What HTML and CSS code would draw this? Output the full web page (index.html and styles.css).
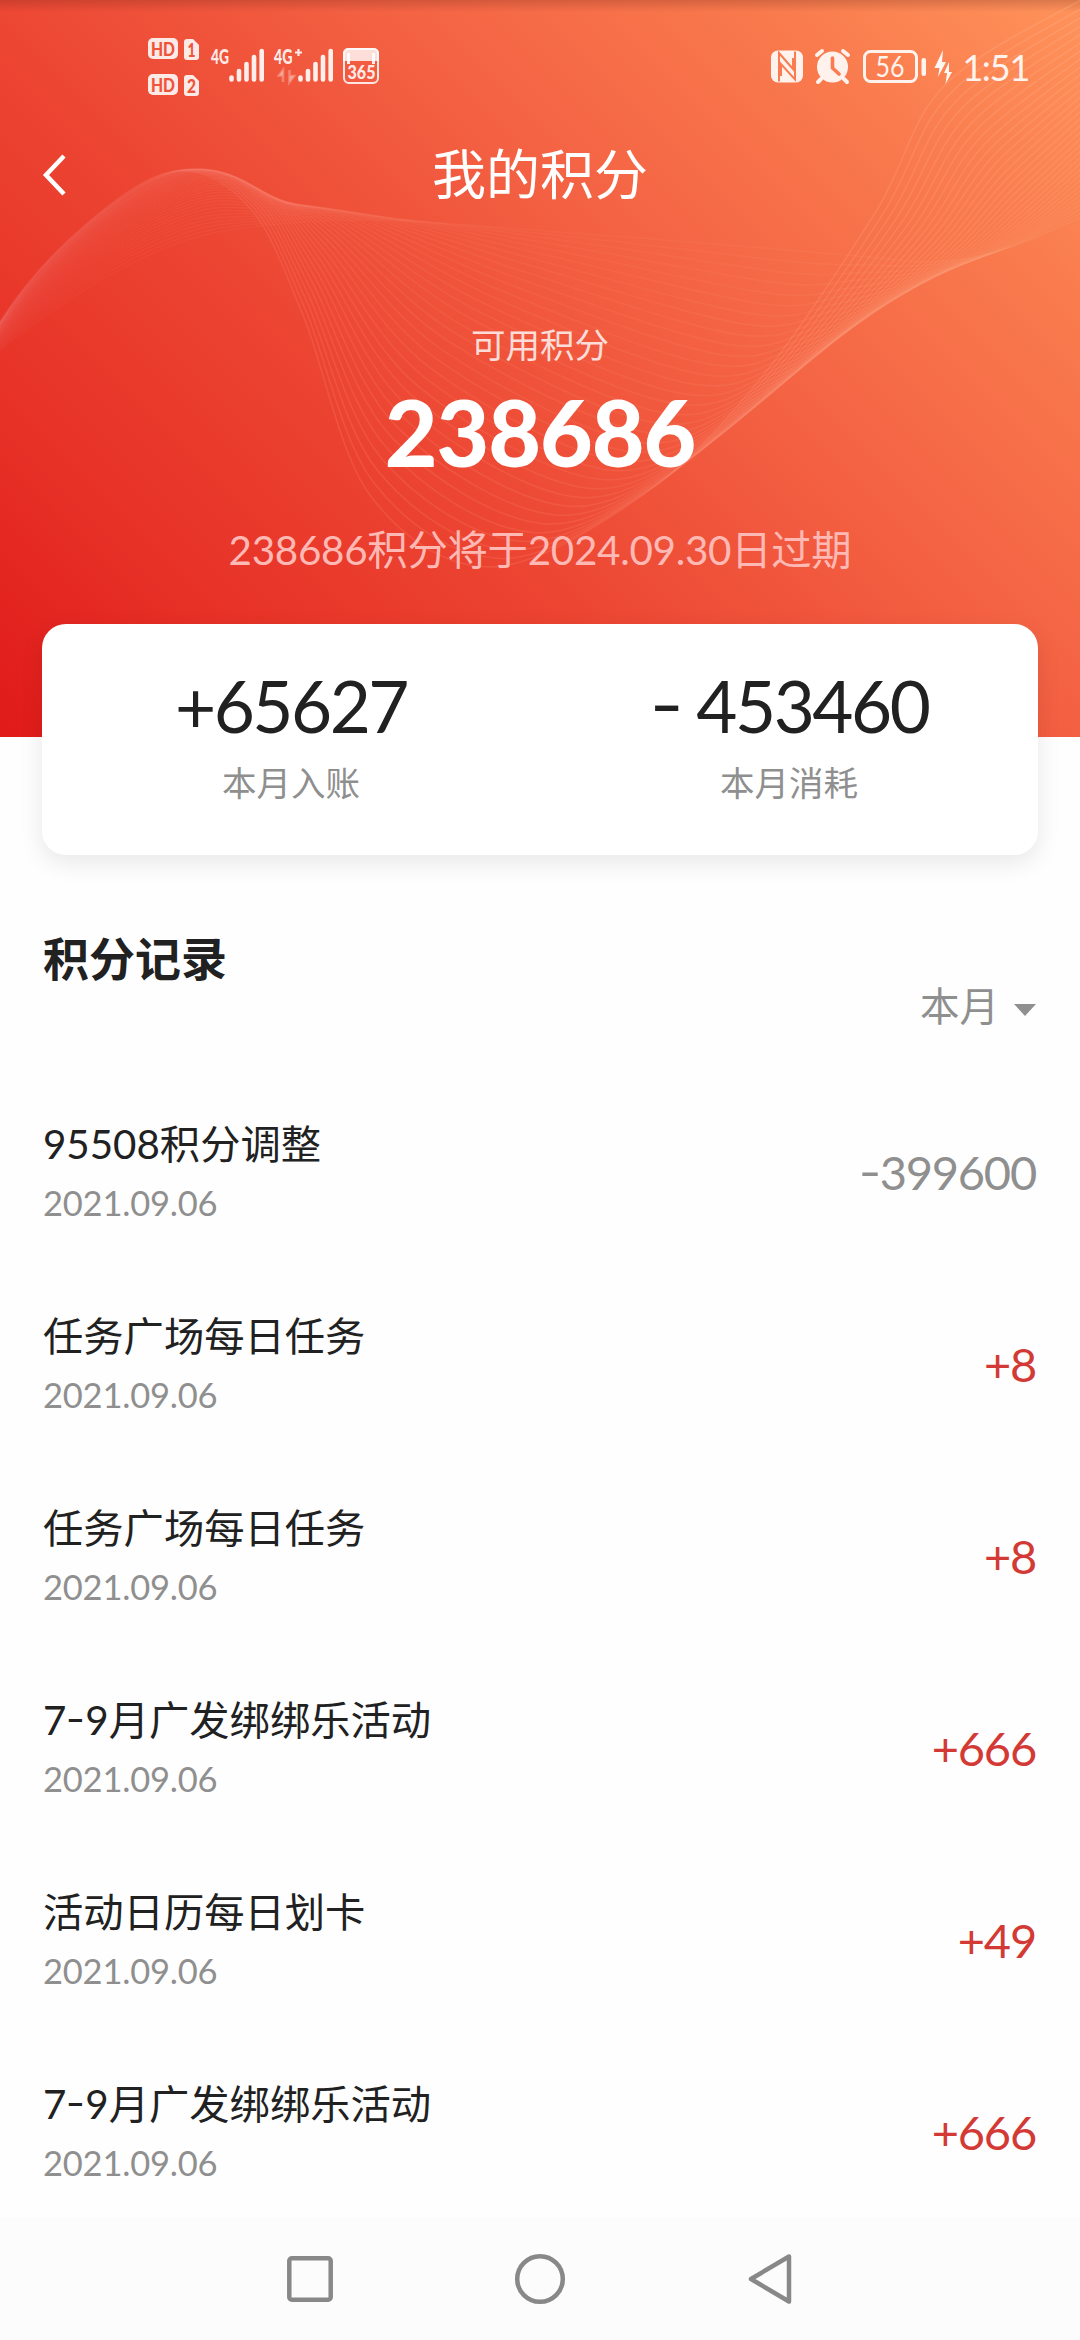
FILE: index.html
```html
<!DOCTYPE html>
<html lang="zh-CN">
<head>
<meta charset="utf-8">
<title>我的积分</title>
<link rel="stylesheet" href="styles.css">
</head>
<body>
<div class="screen">
  <header class="hero">
    <svg class="waves" id="waves" viewBox="0 0 1080 737">
      <defs>
        <linearGradient id="fade" gradientUnits="userSpaceOnUse" x1="0" y1="0" x2="1080" y2="0">
          <stop offset="0" stop-color="#f08c90" stop-opacity=".12"/>
          <stop offset=".3" stop-color="#ff9c88" stop-opacity=".18"/>
          <stop offset=".6" stop-color="#ffa48c" stop-opacity=".16"/>
          <stop offset="1" stop-color="#ffc09a" stop-opacity=".24"/>
        </linearGradient>
      </defs>
    </svg>
    <div class="status">
      <svg class="status-left" width="240" height="62" viewBox="0 0 240 62">
        <g fill="#fff" fill-opacity=".88">
          <rect x="3" y="3" width="30" height="21" rx="5"/>
          <path d="M42 4h6l6 6v12a3 3 0 0 1-3 3h-9a3 3 0 0 1-3-3V7a3 3 0 0 1 3-3z"/>
          <rect x="3" y="39" width="30" height="21" rx="5"/>
          <path d="M42 40h6l6 6v12a3 3 0 0 1-3 3h-9a3 3 0 0 1-3-3V43a3 3 0 0 1 3-3z"/>
        </g>
        <g class="badge-text">
          <text x="6" y="20.500" textLength="24" lengthAdjust="spacingAndGlyphs">HD</text>
          <text x="42.500" y="21.500" textLength="8" lengthAdjust="spacingAndGlyphs">1</text>
          <text x="6" y="56.500" textLength="24" lengthAdjust="spacingAndGlyphs">HD</text>
          <text x="42" y="57.500" textLength="9" lengthAdjust="spacingAndGlyphs">2</text>
        </g>
        <g class="net-text">
          <text x="66" y="28.800" textLength="18" lengthAdjust="spacingAndGlyphs">4G</text>
          <text x="129" y="28.800" textLength="18.500" lengthAdjust="spacingAndGlyphs">4G</text>
        </g>
        <g class="bars">
          <path d="M86.500 42.500v2M94 36v8.500M101.500 29v15.500M109 22v22.500M116.700 16v28.500"/>
          <path d="M155.500 42.500v2M163 36v8.500M170.500 29v15.500M178 22v22.500M185.700 16v28.500"/>
        </g>
        <path d="M150 17.500h7M153.500 14v7" stroke="#fff" stroke-opacity=".88" stroke-width="2.200"/>
        <path d="M138 47V35l-4 5.500h4M144.500 35v12l4.500-6h-4.500" fill="#fff" fill-opacity=".28" stroke="#fff" stroke-opacity=".28" stroke-width="2.500"/>
        <rect x="199" y="14" width="34" height="34" rx="5" fill="none" stroke="#fff" stroke-opacity=".85" stroke-width="2"/>
        <path d="M203 13h26a5 5 0 0 1 5 5v8h-36v-8a5 5 0 0 1 5-5z" fill="#fff" fill-opacity=".8"/>
        <path d="M203.500 18v11M228.500 18v11" stroke="#fff" stroke-opacity=".9" stroke-width="3"/>
        <text class="cal-text" x="202.500" y="44" textLength="28" lengthAdjust="spacingAndGlyphs">365</text>
      </svg>
      <div class="status-right">
        <svg width="194" height="40" viewBox="0 0 194 40">
          <rect x="10" y="4.500" width="32" height="32" rx="7" fill="#fff" fill-opacity=".9"/>
          <path d="M18 35.500V7l14 16V12M34 5.500v28L20 18v12" fill="none" stroke="#fb7c50" stroke-width="2"/>
          <circle cx="71.500" cy="21" r="15.500" fill="#fff" fill-opacity=".9"/>
          <path d="M56 9l5-4M87 9l-5-4M60 33l-3 3M83 33l3 3" stroke="#fff" stroke-opacity=".9" stroke-width="4" stroke-linecap="round"/>
          <path d="M71.500 12v10l6.500 6" fill="none" stroke="#fb7c50" stroke-width="3.600" stroke-linecap="round"/>
          <rect x="103.500" y="5.500" width="52" height="30" rx="6" fill="none" stroke="#fff" stroke-opacity=".9" stroke-width="3"/>
          <rect x="160.500" y="12" width="4.500" height="18" rx="2" fill="#fff" fill-opacity=".9"/>
          <text class="battery-text" x="114.500" y="31" textLength="29" lengthAdjust="spacingAndGlyphs">56</text>
          <path d="M182 4l-8.500 18h5L177 31l8-15h-4zM188 16l-5 11h3l-1.500 11L191 26h-3z" fill="#fff" fill-opacity=".93"/>
        </svg>
        <span class="clock">1:51</span>
      </div>
    </div>
    <nav class="titlebar">
      <svg class="back" width="24" height="44" viewBox="0 0 24 44"><path d="M22 3L4 22l18 19" fill="none" stroke="#fff" stroke-width="4.500"/></svg>
      <h1>我的积分</h1>
    </nav>
    <p class="hero-label">可用积分</p>
    <p class="hero-total">238686</p>
    <p class="hero-note">238686积分将于2024.09.30日过期</p>
  </header>

  <section class="summary">
    <div class="sum"><span class="sum-num">+65627</span><span class="sum-label">本月入账</span></div>
    <div class="sum"><span class="sum-num"><span class="dash">-</span> 453460</span><span class="sum-label">本月消耗</span></div>
  </section>

  <section class="records">
    <h2>积分记录</h2>
    <div class="filter">本月<svg width="22" height="12" viewBox="0 0 22 12"><path d="M0 0h22L11 12z" fill="#909090"/></svg></div>
    <ul class="list">
      <li><div class="info"><span class="name">95508积分调整</span><span class="date">2021.09.06</span></div><span class="amount out"><span class="dash">-</span>399600</span></li>
      <li><div class="info"><span class="name">任务广场每日任务</span><span class="date">2021.09.06</span></div><span class="amount">+8</span></li>
      <li><div class="info"><span class="name">任务广场每日任务</span><span class="date">2021.09.06</span></div><span class="amount">+8</span></li>
      <li><div class="info"><span class="name">7<span class="dash">-</span>9月广发绑绑乐活动</span><span class="date">2021.09.06</span></div><span class="amount">+666</span></li>
      <li><div class="info"><span class="name">活动日历每日划卡</span><span class="date">2021.09.06</span></div><span class="amount">+49</span></li>
      <li><div class="info"><span class="name">7<span class="dash">-</span>9月广发绑绑乐活动</span><span class="date">2021.09.06</span></div><span class="amount">+666</span></li>
    </ul>
  </section>

  <footer class="sysnav">
    <svg width="52" height="52" viewBox="0 0 52 52"><rect x="5.300" y="5.300" width="41.400" height="41.400" rx="2.500"/></svg>
    <svg width="52" height="52" viewBox="0 0 52 52"><circle cx="26" cy="26" r="22.800"/></svg>
    <svg width="52" height="52" viewBox="0 0 52 52"><path d="M45 3.500L7 26l38 22.500z"/></svg>
  </footer>
</div>
<script src="waves.js"></script>
</body>
</html>
```

FILE: styles.css
```css
* { box-sizing: border-box; margin: 0; padding: 0; }

body {
  width: 1080px;
  background: #fff;
  font-family: Lato, "Noto Sans CJK SC", sans-serif;
  color: #212121;
}

.screen {
  display: flex;
  flex-direction: column;
  width: 1080px;
  height: 2340px;
  overflow: hidden;
  background: #fefefe;
}

.hero {
  position: relative;
  flex: none;
  height: 737px;
  color: #fff;
  text-align: center;
  background:
    linear-gradient(rgba(90, 30, 20, .22), rgba(90, 30, 20, 0) 12px),
    linear-gradient(45deg, #e01a19 0%, #e73127 18%, #ec4532 38%, #ef5139 48%, #f46344 62%, #f97a4d 82%, #ff935b 100%);
}

.waves { position: absolute; inset: 0; width: 1080px; height: 737px; }
.waves path { fill: none; stroke: url(#fade); stroke-width: 1.5; }

.status {
  position: relative;
  display: flex;
  justify-content: space-between;
  height: 110px;
  padding: 35px 48px 0 145px;
}
.status-right { display: flex; gap: 4px; padding-top: 11px; }
.badge-text { fill: #ee5439; font: 900 19px Lato, sans-serif; }
.net-text { fill: #fff; fill-opacity: .9; font: 900 21px Lato, sans-serif; }
.cal-text { fill: #fff; fill-opacity: .9; font: 900 18px Lato, sans-serif; }
.battery-text { fill: #fff; fill-opacity: .92; font: 400 28px Lato, sans-serif; }
.bars path { stroke: #fff; stroke-opacity: .9; stroke-width: 4.6; stroke-linecap: round; }
.clock { width: 73px; color: rgba(255, 255, 255, .92); font-size: 36.500px; line-height: 42px; letter-spacing: -1.500px; white-space: nowrap; }

.titlebar {
  position: relative;
  display: grid;
  grid-template-columns: 200px 1fr 200px;
  align-items: center;
  height: 130px;
}
.back { margin-left: 42px; }
.titlebar h1 { font-size: 54px; font-weight: 400; line-height: 60px; }

.hero p { position: relative; }
.hero-label { height: 50px; margin-top: 80px; font-size: 34.500px; line-height: 50px; opacity: .8; }
.hero-total { height: 90px; margin-top: 17px; font-size: 91px; font-weight: 900; line-height: 90px; letter-spacing: -1px; }
.hero-note { height: 60px; margin-top: 43px; font-size: 40.400px; line-height: 60px; letter-spacing: -.3px; color: #ffb9b4; }

.summary {
  position: relative;
  flex: none;
  display: grid;
  grid-template-columns: 1fr 1fr;
  height: 231px;
  margin: -113px 42px 0;
  padding-top: 44px;
  border-radius: 24px;
  background: #fff;
  box-shadow: 0 8px 24px rgba(0, 0, 0, .09);
}
.sum { display: flex; flex-direction: column; align-items: center; }
.sum-num { font-size: 71px; line-height: 76px; letter-spacing: -2.500px; white-space: pre; }
.sum-label { margin-top: 14px; font-size: 34.500px; line-height: 50px; color: #8f8f8f; }

.dash { display: inline-block; margin: 0 .05em; transform: translateY(-.04em) scaleX(1.32); }

.records { flex: 1; min-height: 0; overflow: hidden; padding: 74px 44px 0 43px; }
.records h2 { font-size: 46px; line-height: 60px; font-weight: 700; }
.filter {
  display: flex;
  justify-content: flex-end;
  align-items: center;
  height: 50px;
  margin-top: -11px;
  gap: 15px;
  color: #8f8f8f;
  font-size: 39.500px;
}
.filter svg { margin-top: 14px; }
.list { list-style: none; margin-top: 88px; }
.list li { display: flex; justify-content: space-between; align-items: flex-start; height: 192px; }
.info { display: flex; flex-direction: column; }
.name { font-size: 40.300px; line-height: 56px; }
.date { margin-top: 6px; font-size: 34.500px; line-height: 50px; letter-spacing: -.2px; color: #8f8f8f; }
.amount { margin-top: 28px; font-size: 47px; line-height: 56px; letter-spacing: -1.200px; color: #d33a35; }
.amount.out { color: #8f8f8f; }

.sysnav {
  flex: none;
  display: flex;
  justify-content: center;
  gap: 178px;
  height: 122px;
  padding-top: 35px;
  background: #fcfcfc;
}
.sysnav svg { fill: none; stroke: #888; stroke-width: 4.5; stroke-linejoin: round; }
```

FILE: waves.js
```js
// Ribbon of thin lines blended between three key curves.
const steep = [[-60,455],[0,322],[85,225],[176,171],[250,208],[303,315],[370,495],[489,567],[640,497],[757,383],[875,213],[945,85],[1090,-5]];
const middle = [[-60,440],[0,333],[100,235],[205,183],[275,198],[335,228],[460,330],[660,418],[770,382],[860,322],[955,252],[1015,190],[1090,120]];
const flat = [[-60,405],[0,350],[89,287],[178,243],[260,226],[380,220],[600,235],[800,251],[870,257],[925,262],[980,256],[1030,240],[1090,213]];
const svg = document.getElementById('waves');
const COUNT = 34;

function blend(t) {
  const a = 2 * (t - 0.5) * (t - 1), b = -4 * t * (t - 1), c = 2 * t * (t - 0.5);
  return steep.map((p, i) => [0, 1].map(k => a * p[k] + b * middle[i][k] + c * flat[i][k]));
}

function smooth(p) {
  let d = `M${p[0]}`;
  for (let i = 0; i < p.length - 1; i++) {
    const p0 = p[i - 1] || p[i], p1 = p[i], p2 = p[i + 1], p3 = p[i + 2] || p2;
    const c1 = [0, 1].map(k => p1[k] + (p2[k] - p0[k]) / 6);
    const c2 = [0, 1].map(k => p2[k] - (p3[k] - p1[k]) / 6);
    d += `C${c1} ${c2} ${p2}`;
  }
  return d;
}

for (let i = 0; i < COUNT; i++) {
  const t = i / (COUNT - 1);
  const path = document.createElementNS('http://www.w3.org/2000/svg', 'path');
  path.setAttribute('d', smooth(blend(t)));
  path.setAttribute('opacity', 1 - t * 0.6);
  svg.appendChild(path);
}
```
